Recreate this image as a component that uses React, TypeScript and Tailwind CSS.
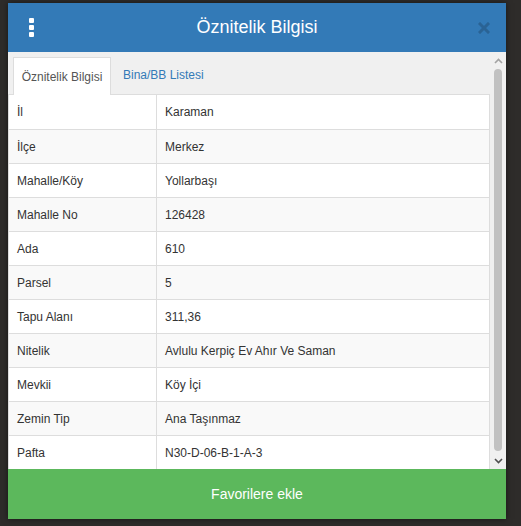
import React from 'react';

const rows: [string, string][] = [
  ['İl', 'Karaman'],
  ['İlçe', 'Merkez'],
  ['Mahalle/Köy', 'Yollarbaşı'],
  ['Mahalle No', '126428'],
  ['Ada', '610'],
  ['Parsel', '5'],
  ['Tapu Alanı', '311,36'],
  ['Nitelik', 'Avlulu Kerpiç Ev Ahır Ve Saman'],
  ['Mevkii', 'Köy İçi'],
  ['Zemin Tip', 'Ana Taşınmaz'],
  ['Pafta', 'N30-D-06-B-1-A-3'],
];

export default function App() {
  return (
    <div
      className="w-[521px] h-[526px] overflow-hidden bg-[#2e2c2a] pt-[3px] pl-[8px]"
      style={{ fontFamily: '"Liberation Sans", Arial, sans-serif' }}
    >
      <div className="w-[498px] flex flex-col shadow-[0_0_6px_rgba(0,0,0,0.5)]">
        {/* header */}
        <div className="h-[49px] bg-[#337ab7] flex items-center justify-between px-[21px] relative">
          <div className="flex flex-col gap-[2px] items-center w-[5px]">
            <span className="block w-[5px] h-[5px] rounded-[1px] bg-white" />
            <span className="block w-[5px] h-[5px] rounded-[1px] bg-white" />
            <span className="block w-[5px] h-[5px] rounded-[1px] bg-white" />
          </div>
          <div className="absolute inset-0 flex items-center justify-center text-[18px] text-white pointer-events-none">
            Öznitelik Bilgisi
          </div>
          <svg width="12" height="12" viewBox="0 0 12 12" className="mr-[-5px]">
            <path d="M2 2 L10 10 M10 2 L2 10" stroke="#2a6395" strokeWidth="3" strokeLinecap="square" />
          </svg>
        </div>

        {/* body */}
        <div className="bg-[#f0f0f0] flex h-[417px]">
          <div className="w-[482px] flex flex-col">
            <div className="h-[43px] flex items-end pl-[5px] border-b border-[#ddd]">
              <div className="h-[38px] w-[98px] bg-white border border-b-0 border-[#ddd] flex items-center justify-center text-[12px] text-[#555] mb-[-1px]">
                Öznitelik Bilgisi
              </div>
              <div className="h-[38px] flex items-center pl-[12px] text-[12px] text-[#337ab7]">
                Bina/BB Listesi
              </div>
            </div>
            <div className="border-l border-r border-[#ddd] bg-white">
              {rows.map(([k, v], i) => (
                <div
                  key={k}
                  className={`flex h-[34px] border-t border-[#ddd] text-[12px] text-[#333] ${i % 2 === 1 ? 'bg-[#f9f9f9]' : 'bg-white'} ${i === 0 ? 'border-t-0 h-[33px]' : ''}`}
                >
                  <div className="w-[148px] border-r border-[#ddd] pl-[8px] flex items-center">{k}</div>
                  <div className="flex-1 pl-[8px] flex items-center">{v}</div>
                </div>
              ))}
            </div>
          </div>
          <div className="w-[16px] flex flex-col items-center bg-[#f0f0f0] pt-[6px] pb-[5px]">
            <svg width="9" height="6" viewBox="0 0 9 6">
              <path d="M1 5 L4.5 1.5 L8 5" stroke="#a3a3a3" strokeWidth="1.6" fill="none" />
            </svg>
            <div className="w-[8px] flex-1 mt-[5px] mb-[7px] rounded-[4px] bg-[#c1c1c1]" />
            <svg width="9" height="6" viewBox="0 0 9 6">
              <path d="M1 1 L4.5 4.5 L8 1" stroke="#505050" strokeWidth="1.6" fill="none" />
            </svg>
          </div>
        </div>

        {/* footer button */}
        <div className="h-[50px] bg-[#5cb85c] flex items-center justify-center text-[14px] text-white">
          Favorilere ekle
        </div>
      </div>
    </div>
  );
}
